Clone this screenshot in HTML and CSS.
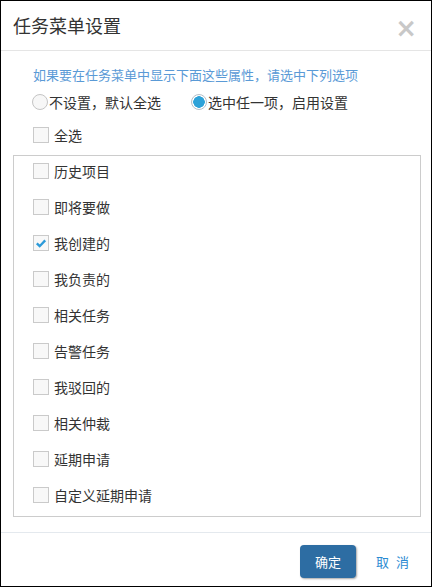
FILE: index.html
```html
<!DOCTYPE html>
<html lang="zh-CN">
<head>
<meta charset="utf-8">
<title>任务菜单设置</title>
<link rel="stylesheet" href="styles.css">
</head>
<body>
<div class="dialog">
  <div class="header">
    <span class="title">任务菜单设置</span>
    <span class="close">×</span>
  </div>
  <div class="body">
    <div class="hint">如果要在任务菜单中显示下面这些属性，请选中下列选项</div>
    <div class="radios">
      <label class="radio-item"><span class="radio"></span><span>不设置，默认全选</span></label>
      <label class="radio-item"><span class="radio checked"></span><span>选中任一项，启用设置</span></label>
    </div>
    <div class="row all"><span class="cb"></span><span class="lbl">全选</span></div>
    <div class="list">
      <div class="row"><span class="cb"></span><span class="lbl">历史项目</span></div>
      <div class="row"><span class="cb"></span><span class="lbl">即将要做</span></div>
      <div class="row"><span class="cb checked"><svg viewBox="0 0 15 15" width="15" height="15"><path d="M3 7.4 L6.1 10.4 L12 4.2" fill="none" stroke="#2b9ad9" stroke-width="2.5"/></svg></span><span class="lbl">我创建的</span></div>
      <div class="row"><span class="cb"></span><span class="lbl">我负责的</span></div>
      <div class="row"><span class="cb"></span><span class="lbl">相关任务</span></div>
      <div class="row"><span class="cb"></span><span class="lbl">告警任务</span></div>
      <div class="row"><span class="cb"></span><span class="lbl">我驳回的</span></div>
      <div class="row"><span class="cb"></span><span class="lbl">相关仲裁</span></div>
      <div class="row"><span class="cb"></span><span class="lbl">延期申请</span></div>
      <div class="row"><span class="cb"></span><span class="lbl">自定义延期申请</span></div>
    </div>
  </div>
  <div class="footer">
    <button class="btn-ok">确定</button>
    <span class="btn-cancel">取 消</span>
  </div>
</div>
</body>
</html>
```
FILE: styles.css
```css
html, body {
  margin: 0;
  padding: 0;
  background: #fff;
}
body {
  font-family: "Noto Sans CJK SC", "Noto Sans", sans-serif;
  color: #333;
}
.dialog {
  box-sizing: border-box;
  width: 432px;
  height: 587px;
  border: 1px solid #000;
  display: flex;
  flex-direction: column;
}
.header {
  height: 49px;
  border-bottom: 1px solid #e5e5e5;
  display: flex;
  align-items: center;
  justify-content: space-between;
  padding: 0 14px 0 12px;
}
.title {
  font-size: 18px;
  color: #333;
  line-height: 24px;
  margin-top: -2px;
}
.close {
  font-size: 26px;
  font-weight: bold;
  color: #c8c8c8;
  line-height: 24px;
  font-family: "DejaVu Sans", sans-serif;
  margin-top: 4px;
}
.body {
  padding: 0 10px 0 12px;
}
.hint {
  margin-top: 15px;
  padding-left: 20px;
  font-size: 13px;
  line-height: 18px;
  color: #5a9ad6;
}
.radios {
  margin-top: 8px;
  padding-left: 19px;
  display: flex;
  height: 20px;
  align-items: center;
  font-size: 14px;
  color: #333;
}
.radio-item {
  display: flex;
  align-items: center;
  margin-right: 30px;
}
.radio {
  box-sizing: border-box;
  width: 16px;
  height: 16px;
  border-radius: 50%;
  border: 1px solid #c4c4c4;
  background: #f7f7f7;
  margin-right: 1px;
}
.radio.checked {
  border: 1px solid #b5bfc8;
  background: radial-gradient(circle, #2ea2d8 0, #2ea2d8 5.5px, #fff 6px);
}
.row {
  display: flex;
  align-items: center;
  height: 20px;
  font-size: 14px;
  color: #333;
}
.row.all {
  margin-top: 13px;
  padding-left: 20px;
}
.cb {
  box-sizing: border-box;
  width: 16px;
  height: 16px;
  border: 1px solid #cacaca;
  background: #f8f8f8;
  margin-right: 5px;
  display: flex;
  align-items: center;
  justify-content: center;
}
.cb svg {
  display: block;
}
.list {
  margin-top: 10px;
  box-sizing: border-box;
  height: 362px;
  border: 1px solid #ccc;
  padding: 5px 0 0 19px;
  display: flex;
  flex-direction: column;
  gap: 16px;
}
.footer {
  margin-top: 15px;
  border-top: 1px solid #e4e9ee;
  display: flex;
  align-items: center;
  justify-content: flex-end;
  padding: 12px 22px 0 0;
}
.btn-ok {
  width: 56px;
  height: 33px;
  border: none;
  border-radius: 4px;
  background: #2d6da3;
  color: #fff;
  font-family: "Noto Sans CJK SC", sans-serif;
  font-size: 13px;
  box-shadow: 1px 1px 2px rgba(0,0,0,0.35);
  padding: 0;
}
.btn-cancel {
  margin-left: 20px;
  font-size: 13px;
  color: #2b8ad2;
  letter-spacing: 2px;
  margin-right: -2px;
}
```
